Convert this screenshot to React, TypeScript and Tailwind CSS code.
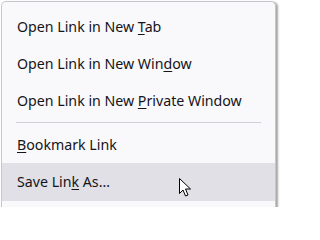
const items = [
  { before: "Open Link in New ", key: "T", after: "ab" },
  { before: "Open Link in New Win", key: "d", after: "ow" },
  { before: "Open Link in New ", key: "P", after: "rivate Window" },
];

function Label({ before, k, after }: { before: string; k: string; after: string }) {
  return (
    <span>
      {before}
      <span className="underline underline-offset-2">{k}</span>
      {after}
    </span>
  );
}

function Cursor() {
  return (
    <svg
      className="absolute left-[178px] top-[177px]"
      width="14"
      height="21"
      viewBox="0 0 14 21"
    >
      <path
        d="M1.5 1.5 L1.5 16.5 L5 13 L7.5 19 L10 18 L7.5 12 L12.5 12 Z"
        fill="#fff"
        stroke="#000"
        strokeWidth="1"
        strokeLinejoin="miter"
      />
    </svg>
  );
}

export default function App() {
  return (
    <div className="relative h-[207px] w-[286px] overflow-hidden bg-white pl-px pt-px font-['Noto_Sans',sans-serif] text-[14.2px] text-[#15141a]">
      <div className="h-[220px] w-[275px] rounded-t-[5px] border border-b-0 border-[#c6c6cc] bg-[#f9f9fb] pt-[6px] shadow-[2px_1px_2px_rgba(0,0,0,0.35)]">
        {items.map((it) => (
          <div key={it.after} className="flex h-[37px] items-center pl-[15px]">
            <Label before={it.before} k={it.key} after={it.after} />
          </div>
        ))}
        <div className="mx-[14px] my-[3px] h-px bg-[#cfcfd8]" />
        <div className="flex h-[37px] items-center pl-[15px]">
          <Label before="" k="B" after="ookmark Link" />
        </div>
        <div className="flex h-[38px] items-center bg-[#e0e0e6] pl-[15px]">
          <Label before="Save Lin" k="k" after=" As…" />
        </div>
      </div>
      <Cursor />
    </div>
  );
}
